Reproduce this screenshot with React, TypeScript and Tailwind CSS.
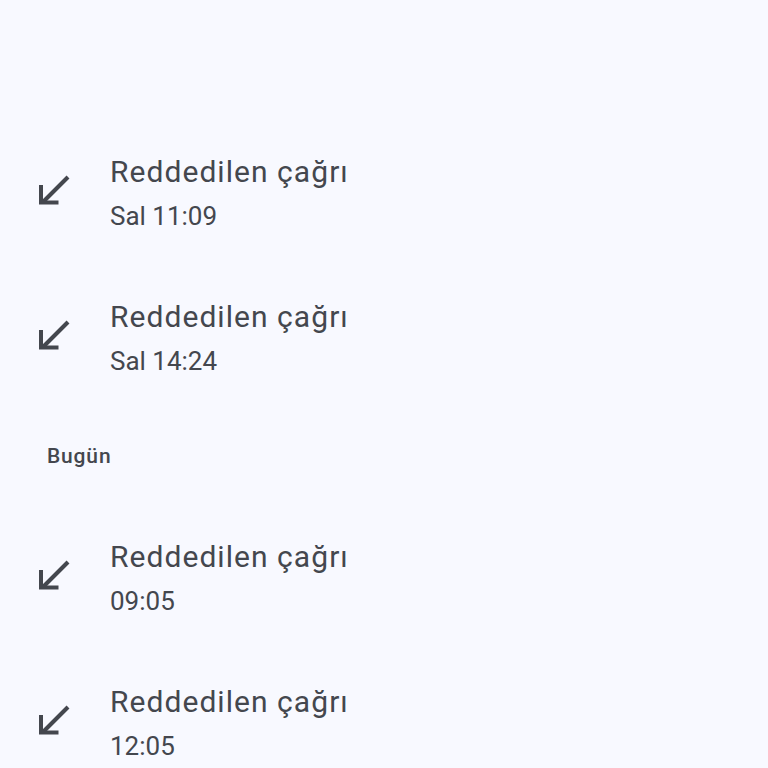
const calls = [
  { title: "Reddedilen çağrı", time: "Sal 11:09" },
  { title: "Reddedilen çağrı", time: "Sal 14:24" },
];

const today = [
  { title: "Reddedilen çağrı", time: "09:05" },
  { title: "Reddedilen çağrı", time: "12:05" },
];

function MissedIcon() {
  return (
    <svg viewBox="0 0 36 36" className="-mt-[8px] h-9 w-9 flex-none" fill="none" stroke="#44474e" strokeWidth="4" strokeLinecap="butt" strokeLinejoin="miter">
      <path d="M33 5 L7.5 30.5" />
      <path d="M6 13 V30.5 H23.5" />
    </svg>
  );
}

function CallRow({ title, time }: { title: string; time: string }) {
  return (
    <div className="flex h-[145px] items-center">
      <div className="flex w-[110px] pl-[35px]">
        <MissedIcon />
      </div>
      <div className="flex flex-col">
        <span className="text-[30px] leading-[44px] tracking-[0.035em] text-[#44474e]">{title}</span>
        <span className="text-[26px] leading-[44px] text-[#44474e]">{time}</span>
      </div>
    </div>
  );
}

export default function App() {
  return (
    <div className="h-[768px] w-[768px] overflow-hidden bg-[#f8f9ff] pt-[121px] font-['Roboto',sans-serif]">
      {calls.map((c, i) => (
        <CallRow key={i} {...c} />
      ))}
      <div className="flex h-[95px] items-center pb-[3px] pl-[47px]">
        <span className="text-[21px] font-medium tracking-[0.04em] text-[#44474e]">Bugün</span>
      </div>
      {today.map((c, i) => (
        <CallRow key={i} {...c} />
      ))}
    </div>
  );
}
